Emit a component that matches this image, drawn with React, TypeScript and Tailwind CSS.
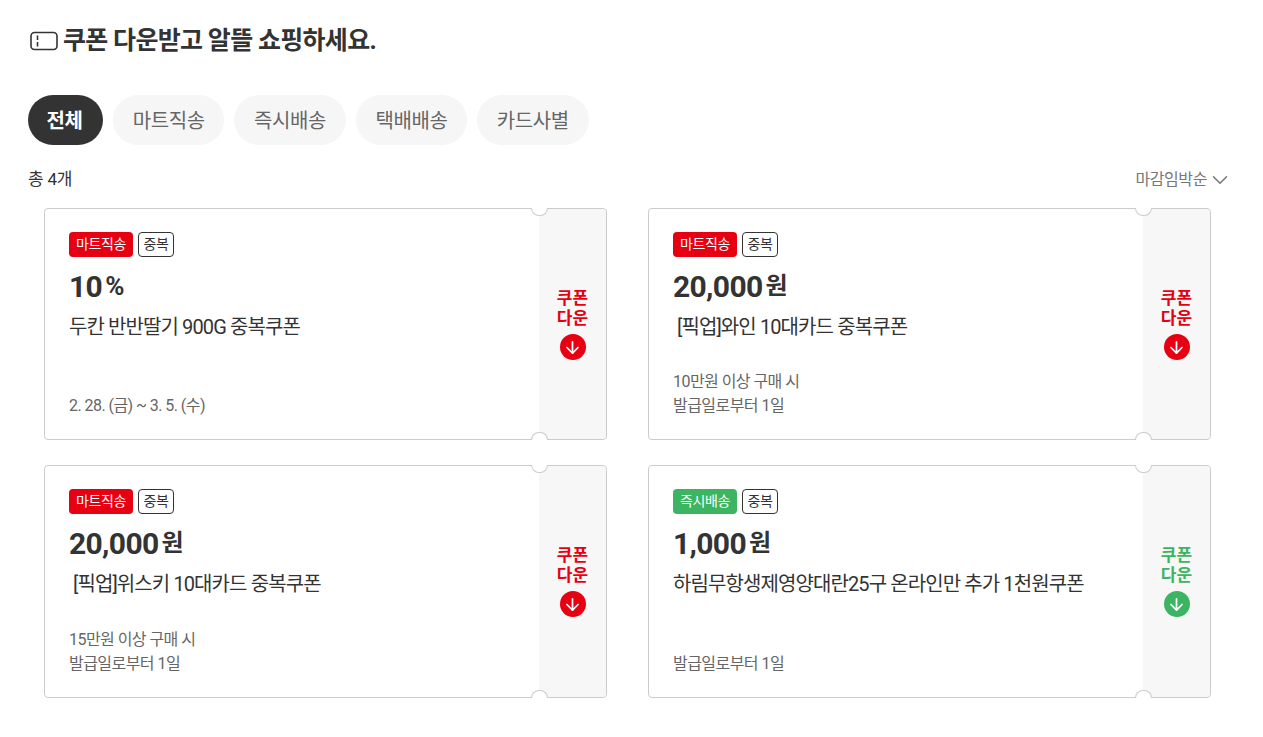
import React from 'react';
import { ArrowDown, ChevronDown } from 'lucide-react';

interface Coupon {
  channel: string;
  value: string;
  unit: string;
  name: string;
  notes: string[];
  green?: boolean;
}

const coupons: Coupon[] = [
  { channel: '마트직송', value: '10', unit: '%', name: '두칸 반반딸기 900G 중복쿠폰', notes: ['2. 28. (금) ~ 3. 5. (수)'] },
  { channel: '마트직송', value: '20,000', unit: '원', name: ' [픽업]와인 10대카드 중복쿠폰', notes: ['10만원 이상 구매 시', '발급일로부터 1일'] },
  { channel: '마트직송', value: '20,000', unit: '원', name: ' [픽업]위스키 10대카드 중복쿠폰', notes: ['15만원 이상 구매 시', '발급일로부터 1일'] },
  { channel: '즉시배송', value: '1,000', unit: '원', name: '하림무항생제영양대란25구 온라인만 추가 1천원쿠폰', notes: ['발급일로부터 1일'], green: true },
];

const tabs = ['마트직송', '즉시배송', '택배배송', '카드사별'];

const TicketIcon = () => (
  <svg width="28" height="20" viewBox="0 0 28 20" fill="none" stroke="#333" strokeWidth="1.6" className="shrink-0">
    <rect x="1" y="1.5" width="26" height="17" rx="3.5" />
    <path d="M7.5 4.5v4.5M7.5 11v4.5" />
  </svg>
);

const CouponCard = ({ coupon }: { coupon: Coupon }) => (
  <div className="relative flex h-full rounded-[4px] border border-[#ccc] bg-white">
    {/* Ticket notches */}
    <span className="absolute -top-px left-[486px] z-10 h-[8px] w-[17px] rounded-b-full border-x border-b border-[#ccc] bg-white" />
    <span className="absolute -bottom-px left-[486px] z-10 h-[8px] w-[17px] rounded-t-full border-x border-t border-[#ccc] bg-white" />

    <div className="flex flex-1 flex-col pl-6 pt-[23px] pb-[21px]">
      <div className="flex gap-[5px]">
        <span className={`flex h-[25px] w-[64px] items-center justify-center rounded-[4px] text-[14px] tracking-[-0.4px] text-white ${coupon.green ? 'bg-[#3cb562]' : 'bg-[#e60012]'}`}>
          {coupon.channel}
        </span>
        <span className="flex h-[25px] w-[36px] items-center justify-center rounded-[4px] border border-[#333] text-[14px] tracking-[-0.4px] text-[#333]">
          중복
        </span>
      </div>
      <div className="mt-[10px] flex h-[38px] items-center font-bold text-[#333]">
        <span className="text-[30px] tracking-[-0.65px]">{coupon.value}</span>
        <span className={`ml-[3px] ${coupon.unit === '%' ? 'text-[26px]' : 'text-[24px]'}`}>{coupon.unit}</span>
      </div>
      <div className="mt-[9px] whitespace-pre text-[20px] leading-[26px] tracking-[-0.9px] text-[#333]">{coupon.name}</div>
      <div className="mt-auto text-[16px] leading-[24px] tracking-[-0.55px] text-[#666]">
        {coupon.notes.map((note) => (
          <div key={note}>{note}</div>
        ))}
      </div>
    </div>

    <div className={`flex w-[67px] flex-col items-center rounded-r-[4px] bg-[#f7f7f7] pt-[79px] ${coupon.green ? 'text-[#3cb562]' : 'text-[#e60012]'}`}>
      <div className="text-center text-[17px] font-bold leading-[20px]">
        쿠폰
        <br />
        다운
      </div>
      <span className={`mt-[6px] flex h-[26px] w-[26px] items-center justify-center rounded-full text-white ${coupon.green ? 'bg-[#3cb562]' : 'bg-[#e60012]'}`}>
        <ArrowDown size={19} strokeWidth={2.2} />
      </span>
    </div>
  </div>
);

const App = () => {
  return (
    <div className="h-[737px] bg-white px-[28px] pt-[24px] font-['Roboto','Noto_Sans_CJK_KR',sans-serif]">
      <div className="w-[1199px]">
        <h2 className="ml-[2px] flex h-[34px] items-center gap-[5px] text-[25px] font-bold tracking-[-0.7px] text-[#333]">
          <TicketIcon />
          쿠폰 다운받고 알뜰 쇼핑하세요.
        </h2>

        {/* Filter tabs */}
        <div className="mt-[37px] flex gap-[10px]">
          <button className="h-[50px] w-[75px] rounded-full bg-[#333] pt-px pr-[2px] text-[20px] font-bold tracking-[-0.4px] text-white">전체</button>
          {tabs.map((tab) => (
            <button key={tab} className="h-[50px] w-[111.4px] rounded-full bg-[#f6f6f6] pt-px text-[20px] tracking-[-0.4px] text-[#666]">
              {tab}
            </button>
          ))}
        </div>

        <div className="mt-[20px] flex h-[28px] items-center justify-between pt-px">
          <span className="text-[17px] tracking-[-0.2px] text-[#333]">총 4개</span>
          <span className="flex items-center text-[16px] tracking-[-0.4px] text-[#777]">
            마감임박순
            <ChevronDown size={26} strokeWidth={1.4} className="-mr-[6px]" />
          </span>
        </div>

        <div className="mt-[15px] grid grid-cols-2 grid-rows-[232px_233px] gap-x-[41px] gap-y-[25px] px-4">
          {coupons.map((coupon) => (
            <CouponCard key={coupon.name} coupon={coupon} />
          ))}
        </div>
      </div>
    </div>
  );
};

export default App;
